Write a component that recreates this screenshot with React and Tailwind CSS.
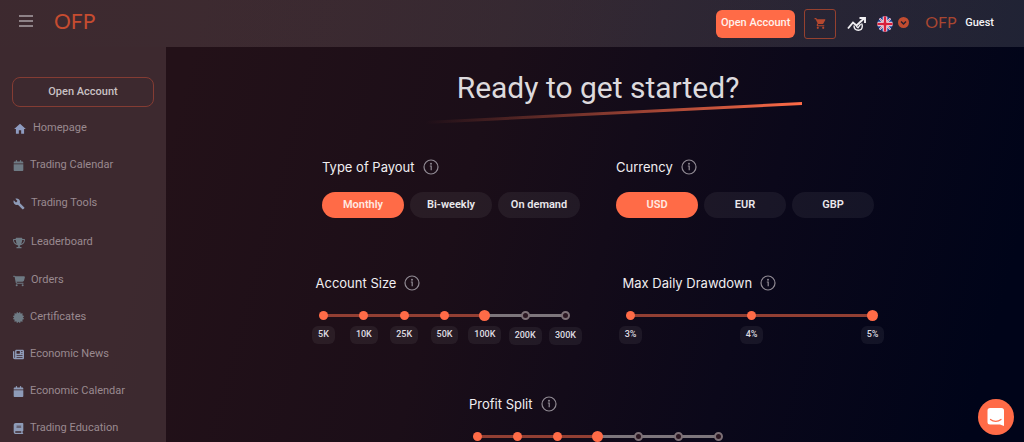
import React, { useState } from "react";
import { FaBook, FaCalendar, FaCartShopping, FaCertificate, FaNewspaper, FaTrophy } from "react-icons/fa6";
import { MdBuild, MdHome, MdShoppingCart } from "react-icons/md";

const menu = [
  { label: "Homepage", icon: MdHome, size: 14, tint: "text-[#8e9bc0]", row: "h-[37px]" },
  { label: "Trading Calendar", icon: FaCalendar, size: 11, tint: "text-[#6e7a84]", row: "h-[37px]" },
  { label: "Trading Tools", icon: MdBuild, size: 12, tint: "text-[#8e9bb8]", row: "h-[39px]" },
  { label: "Leaderboard", icon: FaTrophy, size: 12, tint: "text-[#6e7a84]", row: "h-[39px]" },
  { label: "Orders", icon: FaCartShopping, size: 12, tint: "text-[#6e7a84]", row: "h-[37px]" },
  { label: "Certificates", icon: FaCertificate, size: 11, tint: "text-[#6e7a84]", row: "h-[37px]" },
  { label: "Economic News", icon: FaNewspaper, size: 11, tint: "text-[#8e9bb8]", row: "h-[37px]" },
  { label: "Economic Calendar", icon: FaCalendar, size: 11, tint: "text-[#8e9bb8]", row: "h-[37px]" },
  { label: "Trading Education", icon: FaBook, size: 11, tint: "text-[#8e9bb8]", row: "h-[37px]" },
];

const InfoButton = ({ label }) => (
  <button type="button" aria-label={`About ${label}`} className="text-[#918b94]">
    <svg width="16" height="16" viewBox="0 0 16 16" fill="none" stroke="currentColor" strokeWidth="1.200">
      <circle cx="8" cy="8" r="7" />
      <path d="M6.800 7h1.400v4.200" />
      <circle cx="8" cy="4.700" r=".4" fill="currentColor" />
    </svg>
  </button>
);

const TrendIcon = () => (
  <svg width="20" height="16" viewBox="0 0 20 16" fill="none" stroke="#f1f0f3" strokeWidth="1.9">
    <path d="M1 12.500 6 6.500l3.500 3L17 2.500" />
    <path d="M12.500 2H18v5" />
    <path d="M7 9.500c0 3 2 4.700 4.300 4.700s4-1.800 4-4.200c0-1-.3-1.800-.8-2.500" strokeWidth="1.400" />
    <path d="m9.200 10.300 1.800 1.500 2.600-3.600" strokeWidth="1.400" />
  </svg>
);

const FlagIcon = () => (
  <svg width="16" height="16" viewBox="0 0 16 16">
    <clipPath id="flag">
      <circle cx="8" cy="8" r="7.700" />
    </clipPath>
    <g clipPath="url(#flag)">
      <path fill="#1b3f94" d="M0 0h16v16H0z" />
      <path stroke="#eef0f6" strokeWidth="1.800" d="m0 0 16 16M16 0 0 16" />
      <path stroke="#d8203c" strokeWidth=".6" d="m0 0 16 16M16 0 0 16" />
      <path stroke="#eef0f6" strokeWidth="4.600" d="M8 0v16M0 8h16" />
      <path stroke="#d8203c" strokeWidth="2.600" d="M8 0v16M0 8h16" />
    </g>
  </svg>
);

const SectionTitle = ({ children }) => (
  <div className="flex h-4 items-center gap-2">
    <h2 className="pt-px font-['Inter',sans-serif] text-[13px] text-[#f0eef1]">{children}</h2>
    <InfoButton label={children} />
  </div>
);

const OptionGroup = ({ title, options }) => {
  const [selected, setSelected] = useState(options[0]);

  return (
    <section>
      <SectionTitle>{title}</SectionTitle>
      <div className="mt-[17px] flex gap-[6px]">
        {options.map((option) => (
          <button
            key={option}
            type="button"
            aria-pressed={selected === option}
            onClick={() => setSelected(option)}
            className={`h-[26px] w-[82px] rounded-full text-[11px] font-semibold ${
              selected === option ? "bg-[#ff6b47] text-[#ffe9e2]" : "bg-white/6 text-[#eae8ec]"
            }`}
          >
            {option}
          </button>
        ))}
      </div>
    </section>
  );
};

const StepSlider = ({ title, steps, labels, initial }) => {
  const [value, setValue] = useState(initial);
  const percent = (value / (steps - 1)) * 100;

  return (
    <section className="w-[258px]">
      <SectionTitle>{title}</SectionTitle>
      <div className="relative mx-2 mt-[18px] h-3">
        {/* Track */}
        <div className="absolute inset-x-0 top-[5px] h-[3px] bg-[#7d767c]">
          <div className="h-full bg-[#923f33]" style={{ width: `${percent}%` }} />
        </div>
        {/* Stops */}
        <div className="relative flex h-3 items-center justify-between">
          {Array.from({ length: steps }, (_, i) => (
            <span key={i} className="flex w-0 justify-center">
              <span
                className={
                  i === value
                    ? "size-[11px] shrink-0 rounded-full bg-[#ff6b47]"
                    : i < value
                      ? "size-[9px] shrink-0 rounded-full bg-[#ff6b47]"
                      : "size-[9px] shrink-0 rounded-full border-2 border-[#7d7076] bg-[#2a1621]"
                }
              />
            </span>
          ))}
        </div>
        <input
          type="range"
          aria-label={title}
          min={0}
          max={steps - 1}
          value={value}
          onChange={(e) => setValue(Number(e.target.value))}
          className="absolute inset-0 w-full cursor-pointer opacity-0"
        />
      </div>
      {labels && (
        <div className="mx-2 mt-[5px] flex justify-between">
          {labels.map((label, i) => (
            <span key={label} className="flex w-0 justify-center">
              <span
                className={`flex h-[18px] shrink-0 items-center rounded-md bg-white/6 px-[6px] text-[9px] font-medium text-[#dedbe0] ${
                  i > value ? "mt-px" : ""
                }`}
              >
                {label}
              </span>
            </span>
          ))}
        </div>
      )}
    </section>
  );
};

const Header = () => (
  <header className="flex h-[47px] shrink-0 items-center bg-linear-to-r from-[#ffdcd8]/12 to-white/12 pr-[30px] pl-[19px]">
    <button type="button" aria-label="Toggle menu" className="mb-[5px] text-[#a9a0a5]">
      <svg width="14" height="12" viewBox="0 0 14 12" stroke="currentColor" strokeWidth="1.500">
        <path d="M0 1h14M0 6h14M0 11h14" />
      </svg>
    </button>
    <a href="#" className="mb-[5px] ml-[21px] font-['Lato',sans-serif] text-[21px] leading-6 text-[#c64c30]">
      OFP
    </a>
    <div className="ml-auto flex items-center">
      <button type="button" className="h-7 w-[79px] rounded-md bg-[#ff6b47] text-[11px] font-medium text-[#fff1ec]">
        Open Account
      </button>
      <button
        type="button"
        aria-label="Cart"
        className="ml-[9px] flex h-[30px] w-8 items-center justify-center rounded-[3px] border border-[#96412f] text-[#b5482f]"
      >
        <MdShoppingCart size={13} />
      </button>
      <span className="ml-[11px]">
        <TrendIcon />
      </span>
      <button type="button" aria-label="Language" className="ml-[10px] flex items-center gap-[5px]">
        <FlagIcon />
        <svg width="11" height="11" viewBox="0 0 11 11" className="mb-[3px]" fill="none">
          <circle cx="5.500" cy="5.500" r="5.500" fill="#c24c30" />
          <path d="m3 4.500 2.500 2.500L8 4.500" stroke="#28202f" strokeWidth="1.500" />
        </svg>
      </button>
      <span className="mb-[3px] ml-4 w-8 font-['Lato',sans-serif] text-[16px] leading-5 text-[#a84631]">OFP</span>
      <span className="ml-2 text-[11px] font-medium text-[#f4f3f6]">Guest</span>
    </div>
  </header>
);

const Sidebar = () => (
  <aside className="w-[166px] shrink-0 bg-[#ffdcd8]/12 px-3 pt-[30px]">
    <button
      type="button"
      className="h-[30px] w-full max-w-[143px] rounded-lg border border-[#843c33] text-[11px] font-medium text-[#c9c1c4]"
    >
      Open Account
    </button>
    <nav className="mt-[3px] pl-px">
      {menu.map(({ label, icon: Icon, size, tint, row }) => (
        <a key={label} href="#" className={`flex items-center gap-[6px] text-[11px] text-[#9a8a90] ${row}`}>
          <Icon size={size} className={`shrink-0 ${tint}`} />
          {label}
        </a>
      ))}
    </nav>
  </aside>
);

const App = () => {
  return (
    <div className="flex h-screen flex-col overflow-hidden bg-[linear-gradient(105deg,#231118_18%,#1b0e18_45%,#0b081a_72%,#000419_95%)] font-['Roboto',sans-serif]">
      <Header />
      <div className="flex min-h-0 flex-1">
        <Sidebar />
        <main className="min-w-0 flex-1 overflow-hidden pt-[23px] pl-[6px]">
          <div className="relative mx-auto w-fit">
            <h1 className="text-[30px] leading-9 text-[#dddadd]">Ready to get started?</h1>
            <svg className="absolute top-8 -left-8" width="378" height="24" viewBox="0 0 378 24">
              <defs>
                <linearGradient id="stroke" x1="0" x2="1" y1="0" y2="0">
                  <stop offset="0" stopColor="#ff6b47" stopOpacity="0" />
                  <stop offset="1" stopColor="#ff6b47" />
                </linearGradient>
              </defs>
              <path fill="url(#stroke)" d="M0 19 377 0v3L0 22z" />
            </svg>
          </div>

          <div className="mt-[53px] flex justify-center gap-9">
            <OptionGroup title="Type of Payout" options={["Monthly", "Bi-weekly", "On demand"]} />
            <OptionGroup title="Currency" options={["USD", "EUR", "GBP"]} />
          </div>

          <div className="mt-[57px] flex justify-center gap-[49px]">
            <StepSlider
              title="Account Size"
              steps={7}
              labels={["5K", "10K", "25K", "50K", "100K", "200K", "300K"]}
              initial={4}
            />
            <StepSlider title="Max Daily Drawdown" steps={3} labels={["3%", "4%", "5%"]} initial={2} />
          </div>

          <div className="mt-[51px] flex justify-center">
            <StepSlider title="Profit Split" steps={7} initial={3} />
          </div>
        </main>
      </div>

      {/* Chat launcher */}
      <button
        type="button"
        aria-label="Open chat"
        className="fixed right-[10px] bottom-[7px] flex size-9 items-center justify-center rounded-full bg-[#ff6b47]"
      >
        <svg width="18" height="20" viewBox="0 0 18 20">
          <path fill="#fff" d="M3 1h11.500A2.500 2.500 0 0 1 17 3.500V19l-4-1.500H3A2.500 2.500 0 0 1 .500 15V3.500A2.500 2.500 0 0 1 3 1z" />
          <path d="M3.500 12.500c3 2.500 7.500 2.500 10.500 0" fill="none" stroke="#ff6b47" strokeWidth="1.200" strokeLinecap="round" />
        </svg>
      </button>
    </div>
  );
};

export default App;
